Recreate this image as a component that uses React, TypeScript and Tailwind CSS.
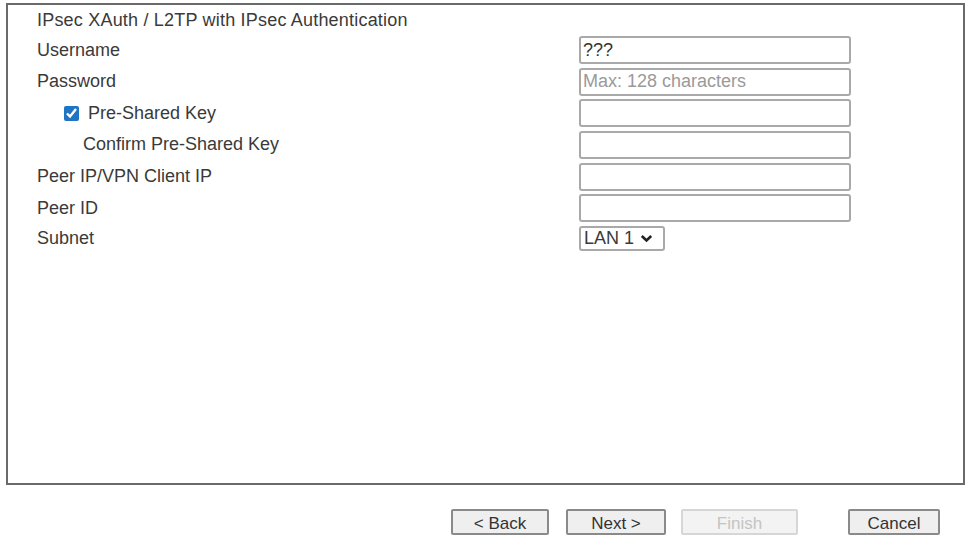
import React from 'react';

const font = { fontFamily: '"Liberation Sans", Arial, sans-serif' };

export default function App() {
  const inputCls =
    'h-[28px] w-[272px] rounded-[3px] border-2 border-[#a9a9a9] bg-white px-[2px] text-[18px] text-[#333] outline-none placeholder:text-[#9a9a9a]';

  return (
    <div className="relative h-[540px] w-[968px] overflow-hidden bg-white text-[#3a3a3a]" style={font}>
      <div className="ml-[6px] mt-[3px] h-[482px] w-[959px] border-2 border-[#6a6a6a]">
        <div className="pl-[29px] pt-[4px]">
          <div className="h-[23px] text-[18px] leading-[23px] tracking-[0.2px]">
            IPsec XAuth / L2TP with IPsec Authentication
          </div>

          <div className="mt-[4px] flex flex-col text-[18px]">
            <div className="flex h-[31.67px] items-start">
              <div className="flex h-[28px] w-[542px] items-center">Username</div>
              <input className={inputCls} defaultValue="???" />
            </div>
            <div className="flex h-[31.67px] items-start">
              <div className="flex h-[28px] w-[542px] items-center">Password</div>
              <input className={inputCls} placeholder="Max: 128 characters" />
            </div>
            <div className="flex h-[31.67px] items-start">
              <div className="flex h-[28px] w-[542px] items-center pl-[27px]">
                <input
                  type="checkbox"
                  defaultChecked
                  className="m-0 h-[15px] w-[15px] accent-[#1f74c4]"
                />
                <span className="ml-[9px]">Pre-Shared Key</span>
              </div>
              <input className={inputCls} />
            </div>
            <div className="flex h-[31.67px] items-start">
              <div className="flex h-[28px] w-[542px] items-center pl-[46px]">Confirm Pre-Shared Key</div>
              <input className={inputCls} />
            </div>
            <div className="flex h-[31.67px] items-start">
              <div className="flex h-[28px] w-[542px] items-center">Peer IP/VPN Client IP</div>
              <input className={inputCls} />
            </div>
            <div className="flex h-[31.67px] items-start">
              <div className="flex h-[28px] w-[542px] items-center">Peer ID</div>
              <input className={inputCls} />
            </div>
            <div className="flex h-[26px] items-start">
              <div className="flex h-[26px] w-[542px] items-center">Subnet</div>
              <div className="flex h-[25px] w-[86px] items-center rounded-[3px] border-2 border-[#a9a9a9] pl-[3px] text-[18px]">
                <span>LAN 1</span>
                <svg className="ml-[6px]" width="13" height="9" viewBox="0 0 13 9">
                  <path d="M1.8 2 L6.5 6.5 L11.2 2" fill="none" stroke="#222" strokeWidth="2.6" />
                </svg>
              </div>
            </div>
          </div>
        </div>
      </div>

      <div className="mr-[28px] mt-[24px] flex justify-end text-[17px]">
        <button className="h-[26px] w-[98px] rounded-[2px] border-2 border-[#8a8a8a] bg-[#efefef] text-[#333]">
          &lt; Back
        </button>
        <button className="ml-[17px] h-[26px] w-[100px] rounded-[2px] border-2 border-[#8a8a8a] bg-[#efefef] text-[#333]">
          Next &gt;
        </button>
        <button
          disabled
          className="ml-[15px] h-[26px] w-[117px] rounded-[2px] border-2 border-[#d6d6d6] bg-[#f3f3f3] text-[#c4c4c4]"
        >
          Finish
        </button>
        <button className="ml-[50px] h-[26px] w-[92px] rounded-[2px] border-2 border-[#8a8a8a] bg-[#efefef] text-[#333]">
          Cancel
        </button>
      </div>
    </div>
  );
}
